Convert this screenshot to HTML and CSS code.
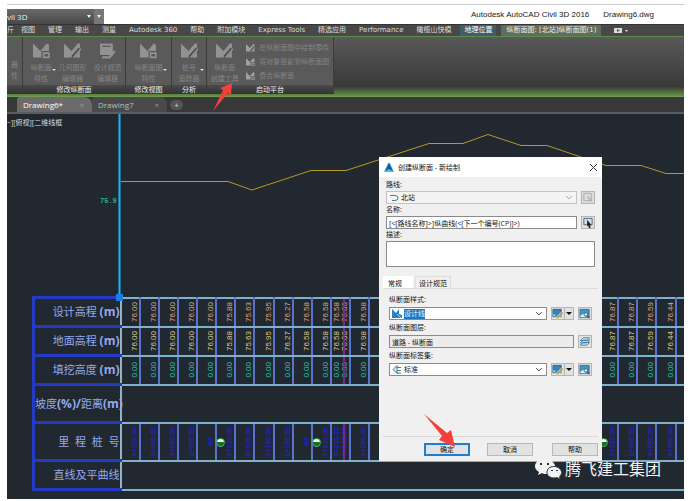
FILE: index.html
```html
<!DOCTYPE html>
<html lang="zh-CN">

<head>
    <meta charset="utf-8">
    <meta name="viewport" content="width=device-width, initial-scale=1.0">
    <title>Autodesk AutoCAD Civil 3D 2016</title>
    <link rel="stylesheet" href="styles.css">
</head>

<body>
    <!-- shared icons -->
    <svg class="sprite" aria-hidden="true">
        <symbol id="profile" viewBox="0 0 16 14">
            <path fill="currentColor" d="M0 0l7 7 6-7 2 1v6H8v6H0z" />
            <path fill="none" stroke="currentColor" stroke-width="1.500" d="M10 9h5v4h-5z" />
        </symbol>
        <symbol id="profile-edit" viewBox="0 0 16 14">
            <path fill="currentColor" d="M0 0l7 7 6-7h2v13H0z" />
            <path fill="none" stroke="#4a4a4a" stroke-width="3" d="M15 5l-7 8" />
            <path fill="none" stroke="currentColor" stroke-width="1.500" d="M16 5l-7 8" />
        </symbol>
        <symbol id="sheet-edit" viewBox="0 0 16 14">
            <path fill="currentColor" d="M1 0h12v11H1z" />
            <path fill="none" stroke="#4a4a4a" d="M3 2.500h8M1 11.500h8" />
            <path fill="none" stroke="currentColor" stroke-width="2" d="M15 7l-5 6H3" />
        </symbol>
        <symbol id="style" viewBox="0 0 12 12">
            <path fill="#2f86c0" stroke="#2d5a7c" d="M.5 1.500h9v8h-9z" />
            <path fill="#bfe3f5" d="M1 6l3 3H1z" />
            <path fill="none" stroke="#f3e3c0" stroke-width="3" d="M11 5l-6 6" />
            <path fill="none" stroke="#b08536" stroke-width="1.500" d="M11 5l-6 6" />
        </symbol>
        <symbol id="preview" viewBox="0 0 12 12">
            <path fill="#3f95c8" stroke="#3d6a85" d="M.5 1.500h10v9H.5z" />
            <path fill="#d8edf7" d="M1 8l4-2 3 4H1z" />
            <circle cx="7" cy="7" r="2" fill="#cfe6f2" stroke="#44606e" />
            <path stroke="#44606e" stroke-width="1.500" d="M8.500 8.500L11 11" />
        </symbol>
    </svg>

    <div class="app">
        <header class="titlebar">
            <div class="quick">
                <span class="workspace">vil 3D</span>
                <button class="drop" aria-label="工作空间"></button>
                <button class="drop more" aria-label="自定义"></button>
            </div>
            <p class="caption"><span>Autodesk AutoCAD Civil 3D 2016</span><span>Drawing6.dwg</span></p>
        </header>

        <nav class="menu">
            <a href="#">斤</a>
            <a href="#">视图</a>
            <a href="#">管理</a>
            <a href="#">输出</a>
            <a href="#">测量</a>
            <a href="#">Autodesk 360</a>
            <a href="#">帮助</a>
            <a href="#">附加模块</a>
            <a href="#">Express Tools</a>
            <a href="#">精选应用</a>
            <a href="#">Performance</a>
            <a href="#">橄榄山快模</a>
            <a href="#" class="geo">地理位置</a>
            <a href="#" class="current">纵断面图: [北站]纵断面图(1)</a>
            <button class="min" aria-label="最小化"><svg viewBox="0 0 14 6" width="14" height="6">
                    <path fill="#ddd" d="M0 0h8v5H0zM11 2h3l-1.500 2z" />
                    <path fill="#555" d="M3 1l3 1.500L3 4z" />
                </svg></button>
        </nav>

        <div class="ribbon">
            <section class="panel cut">
                <div class="tools">
                    <button class="tool"><span>器</span><span>性</span></button>
                </div>
                <h2>&nbsp;</h2>
            </section>
            <section class="panel modify">
                <div class="tools">
                    <button class="tool menu-tool"><svg><use href="#profile" /></svg><span>纵断面</span><span>特性</span></button>
                    <button class="tool"><svg><use href="#profile-edit" /></svg><span>几何图形</span><span>编辑器</span></button>
                    <button class="tool"><svg><use href="#sheet-edit" /></svg><span>设计规范</span><span>编辑器</span></button>
                </div>
                <h2>修改纵断面</h2>
            </section>
            <section class="panel view">
                <div class="tools">
                    <button class="tool menu-tool"><svg><use href="#profile" /></svg><span>纵断面图</span><span>特性</span></button>
                </div>
                <h2>修改视图</h2>
            </section>
            <section class="panel analyze">
                <div class="tools">
                    <button class="tool menu-tool"><svg><use href="#profile-edit" /></svg><span>桩号</span><span>追踪器</span></button>
                </div>
                <h2>分析</h2>
            </section>
            <section class="panel launch">
                <div class="tools">
                    <button class="tool"><svg><use href="#profile-edit" /></svg><span>纵断面</span><span>创建工具</span></button>
                    <div class="list">
                        <button><svg><use href="#profile-edit" /></svg>在纵断面图中绘制零件</button>
                        <button><svg><use href="#profile" /></svg>将对象投影到纵断面图</button>
                        <button><svg><use href="#profile" /></svg>叠合纵断面</button>
                    </div>
                </div>
                <h2>启动平台</h2>
            </section>
            <svg class="arrow arrow-tool" viewBox="0 0 20 28" width="20" height="28">
                <path fill="#f2403b" d="M19 0l-1 12-3-2L0 28 10 7 7 5z" />
            </svg>
        </div>

        <div class="files">
            <a href="#" class="file open">Drawing6*<i>×</i></a>
            <a href="#" class="file">Drawing7<i>×</i></a>
            <button class="add" aria-label="新建">+</button>
        </div>

        <main class="canvas">
            <div class="profile">
                <span class="viewport">−][俯视][二维线框</span>
                <span class="elevation">75.9</span>
                <svg class="graph" viewBox="0 0 677 182" width="677" height="182">
                    <path fill="none" stroke="#b8962a" d="M113 67.500H221L245 76 304 56.500H339L422 29.500H456L481 20.500 514 31.500H540L599 51.500H634L659 59.500H677" />
                    <path stroke="#1f6f9c" stroke-width="3" d="M112.500 0v182" />
                    <path stroke="#35b3a6" d="M112.500 0v182" />
                    <path fill="#1c7fe0" d="M109 180h7v7h-7z" />
                </svg>
            </div>

            <table class="band">
                <colgroup>
                    <col class="name">
                    <col span="29">
                    <col class="rest">
                </colgroup>
                <tr class="design">
                    <th>设计高程 <b>(m)</b></th>
                    <td><span>76.00</span></td>
                    <td><span>76.00</span></td>
                    <td><span>76.00</span></td>
                    <td><span>76.00</span></td>
                    <td><span>76.00</span></td>
                    <td><span>75.88</span></td>
                    <td><span>75.63</span></td>
                    <td><span>75.95</span></td>
                    <td><span>76.27</span></td>
                    <td><span>76.58</span></td>
                    <td><span>76.58</span></td>
                    <td class="pair"><span>76.58</span><span>76.00</span></td>
                    <td><span>76.98</span></td>
                    <td colspan="12"></td>
                    <td><span>76.87</span></td>
                    <td><span>76.87</span></td>
                    <td><span>76.59</span></td>
                    <td><span>76.44</span></td>
                    <td></td>
                </tr>
                <tr class="ground">
                    <th>地面高程 <b>(m)</b></th>
                    <td><span>76.00</span></td>
                    <td><span>76.00</span></td>
                    <td><span>76.00</span></td>
                    <td><span>76.00</span></td>
                    <td><span>76.00</span></td>
                    <td><span>75.88</span></td>
                    <td><span>75.63</span></td>
                    <td><span>75.95</span></td>
                    <td><span>76.27</span></td>
                    <td><span>76.58</span></td>
                    <td><span>76.58</span></td>
                    <td class="pair"><span>76.58</span><span>76.00</span></td>
                    <td><span>76.98</span></td>
                    <td colspan="12"></td>
                    <td><span>76.87</span></td>
                    <td><span>76.87</span></td>
                    <td><span>76.59</span></td>
                    <td><span>76.44</span></td>
                    <td></td>
                </tr>
                <tr class="fill">
                    <th>填挖高度 <b>(m)</b></th>
                    <td><span>0.00</span></td>
                    <td><span>0.00</span></td>
                    <td><span>0.00</span></td>
                    <td><span>0.00</span></td>
                    <td><span>0.00</span></td>
                    <td><span>0.00</span></td>
                    <td><span>0.00</span></td>
                    <td><span>0.00</span></td>
                    <td><span>0.00</span></td>
                    <td><span>0.00</span></td>
                    <td><span>0.00</span></td>
                    <td class="pair"><span>0.00</span><span>0.00</span></td>
                    <td><span>0.00</span></td>
                    <td colspan="12"></td>
                    <td><span>0.00</span></td>
                    <td><span>0.00</span></td>
                    <td><span>0.00</span></td>
                    <td><span>0.00</span></td>
                    <td></td>
                </tr>
                <tr class="slope">
                    <th>坡度<b>(%)/</b>距离<b>(m)</b></th>
                    <td colspan="30"></td>
                </tr>
                <tr class="station">
                    <th>里  程  桩  号</th>
                    <td><span>0+020.00</span></td>
                    <td><span>0+040.00</span></td>
                    <td><span>0+060.00</span></td>
                    <td><span>0+080.00</span></td>
                    <td class="hundred"><span>K0</span></td>
                    <td><span>0+120.00</span></td>
                    <td><span>0+140.00</span></td>
                    <td><span>0+160.00</span></td>
                    <td><span>0+180.00</span></td>
                    <td class="hundred"><span>K0</span></td>
                    <td><span>0+220.00</span></td>
                    <td class="pair"><span>0+233.10</span><span>0+240.00</span></td>
                    <td><span>0+260.00</span></td>
                    <td colspan="12" class="hundred"></td>
                    <td><span>0+520.00</span></td>
                    <td><span>0+540.00</span></td>
                    <td><span>0+560.00</span></td>
                    <td><span>0+580.00</span></td>
                    <td></td>
                </tr>
                <tr class="curve">
                    <th>直线及平曲线</th>
                    <td colspan="30"></td>
                </tr>
            </table>

            <form class="dialog">
                <div class="dialog-title">
                    <svg viewBox="0 0 10 9" width="10" height="9">
                        <path fill="#58b7e8" d="M0 9l4-9h2l4 9z" />
                        <path fill="#0b5f9e" d="M5 0l4 8-4-2-4 2z" />
                    </svg>
                    <h1>创建纵断面 - 新绘制</h1>
                    <button type="button" class="close" aria-label="关闭"><svg viewBox="0 0 7 7" width="7" height="7">
                            <path stroke="#333" d="M0 0l7 7M7 0L0 7" />
                        </svg></button>
                </div>

                <div class="fields">
                    <label for="route">路线:</label>
                    <div class="row">
                        <div class="combo off">
                            <svg viewBox="0 0 10 8" width="10" height="8">
                                <path fill="none" stroke="#4a7a94" d="M1 1.500h5q3 0 3 2.500t-3 2.500H3" />
                            </svg>
                            <select id="route">
                                <option>北站</option>
                            </select>
                            <svg class="chevron" viewBox="0 0 6 4" width="6" height="4">
                                <path fill="none" stroke="#aaa" d="M0 0l3 3 3-3" />
                            </svg>
                        </div>
                        <button type="button" class="icon off" aria-label="选择路线"><svg viewBox="0 0 12 12">
                                <path fill="#ddd" stroke="#aaa" d="M1.500 1.500h8v8h-8zM6 5l4 4-2 1z" />
                            </svg></button>
                    </div>
                    <label for="name">名称:</label>
                    <div class="row">
                        <input id="name" type="text" value="[&lt;[路线名称]&gt;]纵曲线(&lt;[下一个编号(CP)]&gt;)">
                        <button type="button" class="icon" aria-label="编辑名称样板"><svg viewBox="0 0 12 12">
                                <path fill="#cfe2ec" stroke="#4c6472" d="M1.500 1.500h9v7h-9z" />
                                <path fill="#222" d="M5 3l5 6H8l1 3H7L6 9 5 10z" />
                            </svg></button>
                    </div>
                    <label for="note">描述:</label>
                    <textarea id="note"></textarea>
                </div>

                <div class="tabs">
                    <button type="button" class="on">常规</button>
                    <button type="button">设计规范</button>
                </div>
                <div class="general">
                    <label for="style-name">纵断面样式:</label>
                    <div class="row">
                        <div class="combo">
                            <svg viewBox="0 0 10 9" width="10" height="9">
                                <path fill="#2b7fc0" d="M0 0l4 4 3-4v5l3 1v3H0z" />
                                <path stroke="#a8d4ee" d="M5 5l4 4" />
                            </svg>
                            <select id="style-name" class="picked">
                                <option>设计线</option>
                            </select>
                            <svg class="chevron" viewBox="0 0 6 4" width="6" height="4">
                                <path fill="none" stroke="#555" d="M0 0l3 3 3-3" />
                            </svg>
                        </div>
                        <div class="split">
                            <button type="button" class="icon" aria-label="编辑样式"><svg><use href="#style" /></svg></button>
                            <button type="button" class="more" aria-label="更多"></button>
                        </div>
                        <button type="button" class="icon" aria-label="预览样式"><svg><use href="#preview" /></svg></button>
                    </div>
                    <label for="layer">纵断面图层:</label>
                    <div class="row">
                        <input id="layer" type="text" value="道路 - 纵断面" readonly>
                        <button type="button" class="icon" aria-label="选择图层"><svg viewBox="0 0 12 12">
                                <path fill="#d5eaf4" stroke="#3f7d9e" d="M1 10l3-3h7l-3 3zM1 7.500l3-3h7l-3 3zM1 5l3-3h7L8 5z" />
                            </svg></button>
                    </div>
                    <label for="label-set">纵断面标签集:</label>
                    <div class="row">
                        <div class="combo">
                            <svg viewBox="0 0 10 9" width="10" height="9">
                                <path fill="#d9ecef" stroke="#3c7c86" d="M1 4.500l4-4v8zM5 2.500h4M5 5.500h4M5 8h4" />
                            </svg>
                            <select id="label-set">
                                <option>标准</option>
                            </select>
                            <svg class="chevron" viewBox="0 0 6 4" width="6" height="4">
                                <path fill="none" stroke="#555" d="M0 0l3 3 3-3" />
                            </svg>
                        </div>
                        <div class="split">
                            <button type="button" class="icon" aria-label="编辑标签集"><svg><use href="#style" /></svg></button>
                            <button type="button" class="more" aria-label="更多"></button>
                        </div>
                        <button type="button" class="icon" aria-label="预览标签集"><svg><use href="#preview" /></svg></button>
                    </div>
                </div>

                <div class="actions">
                    <button type="button" class="default">确定</button>
                    <button type="button">取消</button>
                    <button type="button" class="help">帮助</button>
                </div>
                <svg class="arrow arrow-ok" viewBox="0 0 31 33" width="31" height="33">
                    <path fill="#f2403b" d="M0 0l23 19 4-3 4 17-16-7 3-4z" />
                </svg>
            </form>

            <div class="brand">
                <svg viewBox="0 0 27 21" width="27" height="21">
                    <path fill="#f4f4f4" d="M10 0c6 0 10 4 10 7-6 0-9 4-8 8-2 0-4 0-5-1l-4 2 1-3C-4 8 1 0 10 0z" />
                    <path fill="#f4f4f4" stroke="#444" d="M19 7.500c4 0 7.500 3 7.500 6 0 2-1 3-2 4l.5 2.500-3-1.500c-5 1.500-10-1-10-5s3-6 7-6z" />
                    <path fill="#333" d="M5 4h2v2H5zM12 4h2v2h-2zM16 11h2v1h-2zM21 11h2v1h-2z" />
                </svg>
                <span>腾飞建工集团</span>
            </div>
        </main>
    </div>
</body>

</html>
```

FILE: styles.css
```css
* {
    box-sizing: border-box;
}

body {
    margin: 0;
    background-color: white;
    font-family: "Open Sans", "Noto Sans CJK SC", sans-serif;
    font-size: 7px;
}

button,
input,
select,
textarea {
    margin: 0;
    padding: 0;
    border: 0;
    border-radius: 0;
    background: none;
    color: inherit;
    font: inherit;
}

a {
    color: inherit;
    text-decoration: none;
}

h1,
h2,
p {
    margin: 0;
    font-size: inherit;
    font-weight: normal;
}

.sprite {
    position: absolute;
    width: 0;
    height: 0;
}

.app {
    margin: 4px 8px 0 7px;
    border-top: 1px solid #ccc;
}

/* title bar */
.titlebar {
    display: flex;
    justify-content: space-between;
    height: 19px;
}

.quick {
    display: flex;
    align-items: center;
    width: 97px;
    margin-top: 4px;
    background: linear-gradient(#6a6a6a, #484848);
    color: #eee;
    font-size: 8px;
}

.workspace {
    flex: 1;
}

.drop {
    width: 10px;
    height: 100%;
}

.drop::before,
.more::before {
    content: "";
    display: block;
    margin: auto;
    width: 0;
    border: 2px solid transparent;
    border-top: 3px solid currentColor;
    border-bottom: 0;
}

.drop.more {
    background: #777;
}

.caption {
    display: flex;
    gap: 14px;
    padding-right: 30px;
    color: #222;
    font-family: "Liberation Sans", sans-serif;
    font-size: 8px;
    line-height: 19px;
}

/* menu */
.menu {
    display: flex;
    align-items: center;
    gap: 13px;
    height: 13px;
    border-top: 1px solid #333;
    border-bottom: 1px solid #5c8a4c;
    background: #484848;
    color: #ddd;
    font-family: "DejaVu Sans", "Noto Sans CJK SC", sans-serif;
    white-space: nowrap;
    line-height: 11px;
}

.menu a:first-child {
    margin-right: -6px;
}

.menu .geo {
    margin: 0 -8px 0 -4px;
    padding: 0 4px;
    background: #3f5d6b;
    color: #fff;
}

.menu .current {
    padding: 0 5px;
    background: #5f6d5c;
    color: #eee;
}

.min svg {
    display: block;
}

/* ribbon */
.ribbon {
    position: relative;
    display: flex;
    height: 60px;
    padding-bottom: 2px;
    border-bottom: 1px solid #6f9a55;
    background: linear-gradient(#595959, #393939 84%, #62923f);
}

.panel {
    display: flex;
    flex-direction: column;
    border-right: 1px solid #3c3c3c;
    background: #5a5a5a;
    color: #858585;
}

.panel h2 {
    background: linear-gradient(#4a4a4a, #333);
    color: #eee;
    line-height: 9px;
    text-align: center;
}

.tools {
    display: flex;
    flex: 1;
    justify-content: space-around;
    padding-top: 6px;
}

.tool {
    position: relative;
    display: flex;
    flex-direction: column;
    align-items: center;
    line-height: 11px;
    white-space: nowrap;
}

.tool svg {
    width: 17px;
    height: 16px;
    margin-bottom: 3px;
    color: #929292;
}

.menu-tool::after {
    content: "";
    position: absolute;
    right: -4px;
    bottom: 14px;
    border: 2px solid transparent;
    border-top-color: #ddd;
    border-bottom: 0;
}

.cut {
    width: 16px;
}

.cut .tool {
    padding-top: 16px;
}

.modify {
    width: 103px;
}

.modify .tools {
    padding-left: 4px;
}

.view {
    width: 46px;
}

.analyze {
    width: 35px;
}

.launch {
    width: 127px;
}

.list {
    display: flex;
    flex-direction: column;
    gap: 4px;
}

.list button {
    display: flex;
    align-items: center;
    gap: 4px;
    line-height: 10px;
}

.list svg {
    width: 9px;
    height: 8px;
    color: #a0a0a0;
}

.arrow {
    position: absolute;
}

.arrow-tool {
    left: 206px;
    top: 46px;
}

/* drawing tabs */
.files {
    display: flex;
    align-items: center;
    height: 17px;
    padding-left: 10px;
    border-bottom: 2px solid #5a5c5e;
    background: #383838;
    color: #bbb;
    font-size: 8px;
}

.file {
    display: flex;
    justify-content: space-between;
    width: 75px;
    height: 15px;
    padding: 0 8px 0 6px;
    border-radius: 3px 8px 0 0;
    background: #4a4a4a;
    line-height: 15px;
}

.file.open {
    background: #6b6b6b;
    color: #fff;
}

.file i {
    color: #999;
    font-style: normal;
}

.add {
    width: 13px;
    height: 10px;
    margin-left: 3px;
    border-radius: 5px;
    background: #555;
    color: #ddd;
    line-height: 9px;
}

/* drawing area */
.canvas {
    position: relative;
    padding-bottom: 8px;
    overflow: hidden;
    background: #212830;
}

.profile {
    position: relative;
    height: 182px;
}

.graph {
    display: block;
    overflow: visible;
}

.viewport {
    position: absolute;
    left: 0;
    top: 3px;
    color: #ddd;
}

.elevation {
    position: absolute;
    left: 93px;
    top: 83px;
    color: #2fb094;
    font-family: "Liberation Mono", monospace;
    font-weight: bold;
}

.band {
    width: calc(100% - 25px);
    margin-left: 25px;
    border-collapse: collapse;
    table-layout: fixed;
}

.name {
    width: 87px;
}

.rest {
    width: 8px;
}

.band tr {
    height: 29px;
}

.band .slope,
.band .station {
    height: 38px;
}

.band th,
.band td {
    padding: 0;
}

.band th {
    border: 3px solid #2439c4;
    border-right: 2px solid #8fb4c8;
    color: #93a9ee;
    font-size: 11px;
    font-weight: normal;
    line-height: 16px;
    text-align: right;
    white-space: pre;
    direction: rtl;
    unicode-bidi: plaintext;
}

.band th b {
    font-size: 12px;
}

.band td {
    position: relative;
    border: 2px solid #5773cc;
    border-top-color: #7fb0cc;
    border-bottom-color: #7fb0cc;
    font-family: "Liberation Sans", sans-serif;
    font-size: 8px;
    line-height: 8px;
    text-align: right;
    vertical-align: middle;
}

.band td:last-child {
    border-right: 0;
}

.band td span {
    display: inline-block;
    writing-mode: vertical-rl;
    transform: rotate(180deg);
    vertical-align: middle;
}

.design td {
    color: #d8a888;
}

.ground td {
    color: #d8cc8c;
}

.fill td {
    color: #25c4b4;
}

.station td {
    color: #2020d0;
    font-size: 7px;
    font-weight: bold;
}

.band .pair {
    white-space: nowrap;
}

.pair::after {
    content: "";
    position: absolute;
    right: 4px;
    top: 0;
    bottom: 0;
    width: 2px;
    background: #7a2a86;
}

/* hundred-metre marks */
.hundred::after {
    content: "";
    position: absolute;
    left: calc(100% + 1px);
    top: 14px;
    width: 7px;
    height: 7px;
    border: 1px solid #2fae45;
    border-radius: 50%;
    background: linear-gradient(#e8ffe8 50%, #1d6b2c 50%);
    z-index: 1;
}

/* dialog */
.dialog {
    position: absolute;
    left: 372px;
    top: 43px;
    width: 223px;
    background: #f0f0f0;
    color: #111;
    z-index: 2;
}

.dialog-title {
    display: flex;
    align-items: center;
    gap: 4px;
    height: 20px;
    padding: 0 5px;
    background: #fff;
}

.close {
    margin-left: auto;
}

.close svg {
    display: block;
}

.fields {
    padding: 2px 7px 0;
}

.dialog label {
    display: block;
    line-height: 12px;
}

.row {
    display: flex;
    gap: 4px;
    height: 13px;
}

.combo,
.dialog input {
    display: flex;
    flex: 1;
    align-items: center;
    min-width: 0;
    padding: 0 2px;
    border: 1px solid #8a8a8a;
    background: #fff;
}

.combo.off {
    border-color: #c4c4c4;
    background: #f4f4f4;
}

.combo select {
    appearance: none;
    margin-left: 2px;
    line-height: 10px;
}

.combo .picked {
    background: #1b78c0;
    color: #e6f4ff;
}

.chevron {
    margin: 0 2px 0 auto;
}

.dialog input[readonly] {
    background: #ececec;
}

.icon {
    width: 14px;
    border: 1px solid #b4b4b4;
    background: #e2e2e2;
}

.icon svg {
    display: block;
    width: 12px;
    height: 11px;
}

.icon.off {
    background: #ddd;
}

.dialog textarea {
    display: block;
    width: 100%;
    height: 26px;
    border: 1px solid #8a8a8a;
    background: #fff;
    resize: none;
}

.tabs {
    display: flex;
    gap: 2px;
    margin: 9px 4px 0;
    border-bottom: 1px solid #dcdcdc;
}

.tabs button {
    height: 12px;
    padding: 0 3px;
    border: 1px solid #ddd;
    border-bottom: 0;
}

.tabs .on {
    padding: 0 10px 0 4px;
    border-color: #fff;
    background: #fff;
}

.general {
    padding: 3px 10px 0;
}

.general label {
    line-height: 15px;
}

.split {
    display: flex;
}

.split .more {
    width: 9px;
    border: 1px solid #b4b4b4;
    border-left: 0;
    background: #e2e2e2;
}

.split .more::before {
    border-width: 3px 3px 0;
}

.actions {
    display: flex;
    gap: 17px;
    justify-content: flex-end;
    margin: 60px 4px 0;
    padding: 6px 0 5px;
    border-top: 1px solid #d8d8d8;
}

.actions button {
    width: 46px;
    height: 13px;
    border: 1px solid #b8b8b8;
    background: #e2e2e2;
    line-height: 10px;
}

.actions .default {
    border: 2px solid #1f7fcf;
}

.actions .help {
    margin-left: 2px;
}

.arrow-ok {
    left: 45px;
    top: 257px;
}

/* watermark */
.brand {
    position: absolute;
    right: 23px;
    bottom: 19px;
    display: flex;
    align-items: center;
    gap: 3px;
    color: #f4f4f4;
    font-size: 16px;
    line-height: 22px;
    z-index: 3;
}
```
